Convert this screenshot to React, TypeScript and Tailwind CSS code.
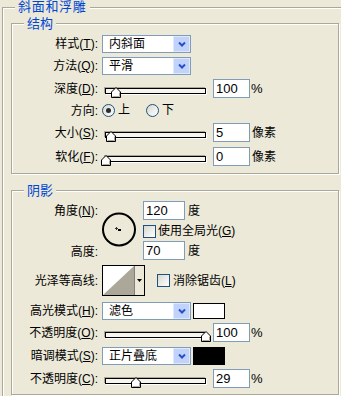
import React from "react";

function Lbl({ t, k }: { t: string; k?: string }) {
  return (
    <div className="w-[86px] shrink-0 text-right text-[12px] leading-[14px] text-black whitespace-nowrap">
      {t}
      {k ? (
        <>
          (<span className="underline underline-offset-1">{k}</span>)
        </>
      ) : null}
      :
    </div>
  );
}

function Chevron() {
  return (
    <svg width="8" height="6" viewBox="0 0 8 6">
      <path d="M1 1.5 L4 4.5 L7 1.5" stroke="#2450c8" strokeWidth="2" fill="none" />
    </svg>
  );
}

function Combo({ v }: { v: string }) {
  return (
    <div className="ml-[4px] flex h-[18px] w-[89px] shrink-0 items-center border border-[#7f9db9] bg-white">
      <span className="flex-1 pl-[6px] text-[12px] leading-[14px] text-black">{v}</span>
      <div className="flex h-[16px] w-[17px] items-center justify-center rounded-[1px] border border-[#dfe8fd] bg-[#c1d3fb]">
        <Chevron />
      </div>
    </div>
  );
}

function Num({ v, w }: { v: string; w: string }) {
  return (
    <div
      className={
        w +
        " h-[19px] shrink-0 border border-[#7f9db9] bg-white pl-[2px] text-[13px] leading-[17px] text-black"
      }
    >
      {v}
    </div>
  );
}

function Slider({ thumb }: { thumb: string }) {
  return (
    <div className="relative ml-[3px] h-[19px] w-[112px] shrink-0">
      <div className="absolute left-[4px] top-[9px] h-[6px] w-[101px] border border-black bg-[#f6f5ee] shadow-[-1px_-1px_0_#aca899,1px_1px_0_#fff]" />
      <svg className={"absolute top-[8px] " + thumb} width="10" height="11" viewBox="0 0 10 11">
        <path d="M0.5 10.5 V5 L5 0.5 L9.5 5 V10.5 Z" fill="#ffffff" stroke="#000" />
        <path d="M8.5 5.5 V9.5 H1.5" stroke="#aca899" fill="none" />
      </svg>
    </div>
  );
}

function Check() {
  return (
    <div className="h-[13px] w-[13px] shrink-0 border border-[#1c5180] bg-linear-to-br from-[#d8d8d0] to-white" />
  );
}

function Radio({ on }: { on?: boolean }) {
  return (
    <div className="flex h-[13px] w-[13px] shrink-0 items-center justify-center rounded-full border border-[#1c5180] bg-linear-to-br from-[#d8d8d0] to-white">
      {on ? <div className="h-[5px] w-[5px] rounded-full bg-[#2b2b2b]" /> : null}
    </div>
  );
}

function Box({ title, className, children }: { title: string; className: string; children?: React.ReactNode }) {
  return (
    <div
      className={
        "relative w-[328px] border border-[#aca899] shadow-[inset_1px_1px_0_#fff,1px_1px_0_#fff] " + className
      }
    >
      <span className="absolute left-[12px] top-[-7px] bg-[#ece9d8] px-[3px] text-[13px] leading-[14px] text-[#0046d5]">
        {title}
      </span>
      {children}
    </div>
  );
}

export default function App() {
  return (
    <div className="h-[396px] w-[341px] overflow-hidden bg-[#ece9d8] pl-[2px] pt-[7px] font-[family-name:Liberation_Sans,Noto_Sans_CJK_SC,sans-serif] text-[12px] text-black">
      <div className="relative h-[420px] w-[360px] border-l border-t border-[#aca899] pl-[8px] pt-[15px] shadow-[inset_1px_1px_0_#fff]">
        <span className="absolute left-[12px] top-[-8px] bg-[#ece9d8] px-[3px] text-[13px] leading-[14px] tracking-[0.7px] text-[#0046d5]">
          斜面和浮雕
        </span>

        <Box title="结构" className="h-[151px]">
          <div className="flex flex-col">
            <div className="mt-[11px] flex h-[18px] items-center">
              <Lbl t="样式" k="T" />
              <Combo v="内斜面" />
            </div>
            <div className="mt-[4px] flex h-[18px] items-center">
              <Lbl t="方法" k="Q" />
              <Combo v="平滑" />
            </div>
            <div className="mt-[4px] flex h-[19px] items-center">
              <Lbl t="深度" k="D" />
              <Slider thumb="left-[10px]" />
              <Num v="100" w="w-[37px]" />
              <span className="ml-[1px] text-[13px]">%</span>
            </div>
            <div className="mt-[6px] flex h-[13px] items-center">
              <Lbl t="方向" />
              <div className="ml-[4px] flex items-center">
                <Radio on />
                <span className="ml-[3px] leading-[13px]">上</span>
                <div className="ml-[16px]">
                  <Radio />
                </div>
                <span className="ml-[3px] leading-[13px]">下</span>
              </div>
            </div>
            <div className="mt-[6px] flex h-[19px] items-center">
              <Lbl t="大小" k="S" />
              <Slider thumb="left-[5px]" />
              <Num v="5" w="w-[37px]" />
              <span className="ml-[2px]">像素</span>
            </div>
            <div className="mt-[5px] flex h-[19px] items-center">
              <Lbl t="软化" k="F" />
              <Slider thumb="left-[0px]" />
              <Num v="0" w="w-[37px]" />
              <span className="ml-[2px]">像素</span>
            </div>
          </div>
        </Box>

        <Box title="阴影" className="mt-[16px] h-[205px]">
          <div className="flex flex-col">
            <div className="mt-[10px] flex h-[60px]">
              <div className="flex w-[86px] shrink-0 flex-col justify-between">
                <div className="flex h-[19px] items-center justify-end whitespace-nowrap">
                  角度(<span className="underline underline-offset-1">N</span>):
                </div>
                <div className="flex h-[19px] items-center justify-end">高度:</div>
              </div>
              <div className="ml-[4px] mt-[11px] h-[35px] w-[34px] shrink-0">
                <svg width="34" height="35" viewBox="0 0 34 35" shapeRendering="crispEdges">
                  <circle cx="17" cy="17.5" r="16" fill="none" stroke="#000" strokeWidth="2" shapeRendering="auto" />
                  <rect x="13" y="16" width="3" height="1" fill="#333" />
                  <rect x="14" y="15" width="1" height="3" fill="#333" />
                  <rect x="16" y="17" width="3" height="2" fill="#000" />
                </svg>
              </div>
              <div className="ml-[7px] flex flex-col">
                <div className="flex h-[19px] items-center">
                  <Num v="120" w="w-[42px]" />
                  <span className="ml-[3px]">度</span>
                </div>
                <div className="mt-[5px] flex h-[13px] items-center">
                  <Check />
                  <span className="ml-[2px] whitespace-nowrap leading-[13px]">
                    使用全局光(<span className="underline underline-offset-1">G</span>)
                  </span>
                </div>
                <div className="mt-[3px] flex h-[19px] items-center">
                  <Num v="70" w="w-[42px]" />
                  <span className="ml-[3px]">度</span>
                </div>
              </div>
            </div>

            <div className="mt-[4px] flex h-[31px] items-center">
              <Lbl t="光泽等高线" />
              <div className="ml-[4px] flex h-[31px] w-[43px] shrink-0 border border-black bg-white">
                <svg width="31" height="29" viewBox="0 0 31 29">
                  <polygon points="0,29 31,0 31,29" fill="#aca899" />
                </svg>
                <div className="flex w-[10px] items-center justify-center border-l border-[#808080] bg-[#ece9d8]">
                  <svg width="5" height="3" viewBox="0 0 5 3">
                    <polygon points="0,0 5,0 2.5,3" fill="#000" />
                  </svg>
                </div>
              </div>
              <div className="ml-[12px]">
                <Check />
              </div>
              <span className="ml-[3px] whitespace-nowrap">
                消除锯齿(<span className="underline underline-offset-1">L</span>)
              </span>
            </div>

            <div className="mt-[6px] flex h-[18px] items-center">
              <Lbl t="高光模式" k="H" />
              <Combo v="滤色" />
              <div className="ml-[2px] h-[16px] w-[32px] shrink-0 border border-black bg-white" />
            </div>
            <div className="mt-[3px] flex h-[19px] items-center">
              <Lbl t="不透明度" k="O" />
              <Slider thumb="left-[100px]" />
              <Num v="100" w="w-[37px]" />
              <span className="ml-[1px] text-[13px]">%</span>
            </div>
            <div className="mt-[5px] flex h-[18px] items-center">
              <Lbl t="暗调模式" k="S" />
              <Combo v="正片叠底" />
              <div className="ml-[2px] h-[18px] w-[32px] shrink-0 border border-black bg-black" />
            </div>
            <div className="mt-[4px] flex h-[19px] items-center">
              <Lbl t="不透明度" k="C" />
              <Slider thumb="left-[30px]" />
              <Num v="29" w="w-[37px]" />
              <span className="ml-[1px] text-[13px]">%</span>
            </div>
          </div>
        </Box>
      </div>
    </div>
  );
}
